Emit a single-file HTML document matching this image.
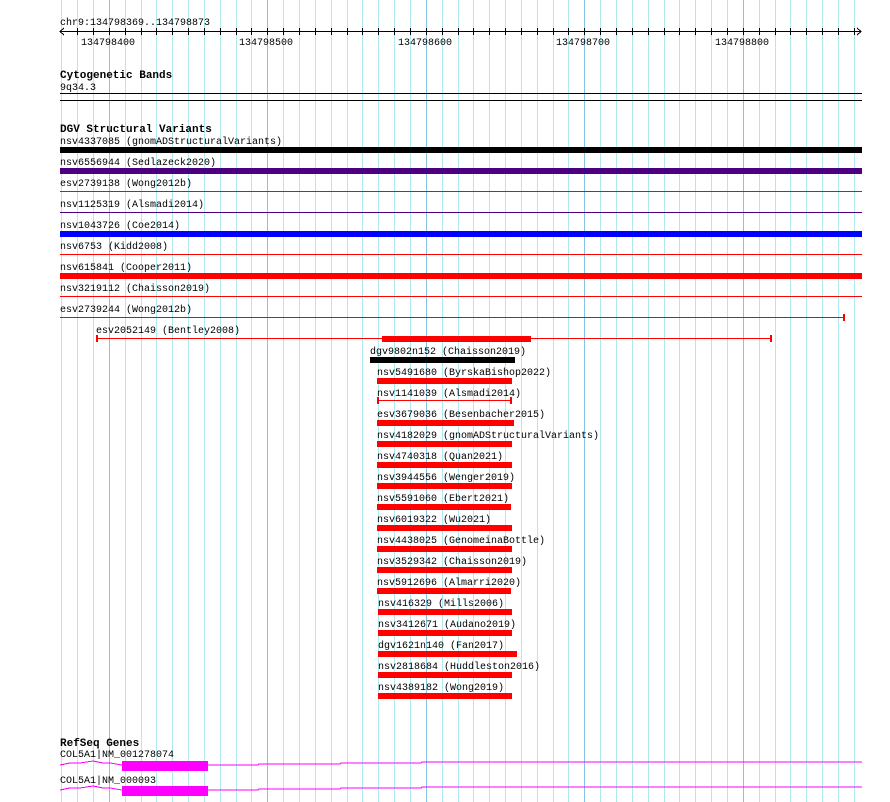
<!DOCTYPE html>
<html><head><meta charset="utf-8"><style>
html,body{margin:0;padding:0;background:#fff;width:890px;height:802px;overflow:hidden}
svg{display:block}
text{font-family:"Liberation Mono",monospace;font-size:10px;fill:#000}
.b{font-weight:bold;font-size:11px}
</style></head><body>
<svg width="890" height="802" viewBox="0 0 890 802" xmlns="http://www.w3.org/2000/svg" shape-rendering="crispEdges">
<g stroke="#aeeaf0" stroke-width="1">
<line x1="61.5" y1="0" x2="61.5" y2="802"/><line x1="77.5" y1="0" x2="77.5" y2="802"/><line x1="93.5" y1="0" x2="93.5" y2="802"/>
<line x1="125.5" y1="0" x2="125.5" y2="802"/><line x1="141.5" y1="0" x2="141.5" y2="802"/><line x1="156.5" y1="0" x2="156.5" y2="802"/><line x1="172.5" y1="0" x2="172.5" y2="802"/><line x1="188.5" y1="0" x2="188.5" y2="802"/><line x1="204.5" y1="0" x2="204.5" y2="802"/><line x1="220.5" y1="0" x2="220.5" y2="802"/><line x1="236.5" y1="0" x2="236.5" y2="802"/><line x1="251.5" y1="0" x2="251.5" y2="802"/>
<line x1="283.5" y1="0" x2="283.5" y2="802"/><line x1="299.5" y1="0" x2="299.5" y2="802"/><line x1="315.5" y1="0" x2="315.5" y2="802"/><line x1="331.5" y1="0" x2="331.5" y2="802"/><line x1="347.5" y1="0" x2="347.5" y2="802"/><line x1="362.5" y1="0" x2="362.5" y2="802"/><line x1="378.5" y1="0" x2="378.5" y2="802"/><line x1="394.5" y1="0" x2="394.5" y2="802"/><line x1="410.5" y1="0" x2="410.5" y2="802"/>
<line x1="442.5" y1="0" x2="442.5" y2="802"/><line x1="458.5" y1="0" x2="458.5" y2="802"/><line x1="473.5" y1="0" x2="473.5" y2="802"/><line x1="489.5" y1="0" x2="489.5" y2="802"/><line x1="505.5" y1="0" x2="505.5" y2="802"/><line x1="521.5" y1="0" x2="521.5" y2="802"/><line x1="537.5" y1="0" x2="537.5" y2="802"/><line x1="553.5" y1="0" x2="553.5" y2="802"/><line x1="568.5" y1="0" x2="568.5" y2="802"/>
<line x1="600.5" y1="0" x2="600.5" y2="802"/><line x1="616.5" y1="0" x2="616.5" y2="802"/><line x1="632.5" y1="0" x2="632.5" y2="802"/><line x1="648.5" y1="0" x2="648.5" y2="802"/><line x1="664.5" y1="0" x2="664.5" y2="802"/><line x1="679.5" y1="0" x2="679.5" y2="802"/><line x1="695.5" y1="0" x2="695.5" y2="802"/><line x1="711.5" y1="0" x2="711.5" y2="802"/><line x1="727.5" y1="0" x2="727.5" y2="802"/>
<line x1="759.5" y1="0" x2="759.5" y2="802"/><line x1="775.5" y1="0" x2="775.5" y2="802"/><line x1="790.5" y1="0" x2="790.5" y2="802"/><line x1="806.5" y1="0" x2="806.5" y2="802"/><line x1="822.5" y1="0" x2="822.5" y2="802"/><line x1="838.5" y1="0" x2="838.5" y2="802"/><line x1="854.5" y1="0" x2="854.5" y2="802"/>
</g>
<g stroke="#86c4e6" stroke-width="1">
<line x1="109.5" y1="0" x2="109.5" y2="802"/><line x1="267.5" y1="0" x2="267.5" y2="802"/><line x1="426.5" y1="0" x2="426.5" y2="802"/><line x1="584.5" y1="0" x2="584.5" y2="802"/><line x1="743.5" y1="0" x2="743.5" y2="802"/>
</g>
<text x="60" y="25">chr9:134798369..134798873</text>
<g stroke="#000" stroke-width="1">
<line x1="60" y1="31.5" x2="861" y2="31.5"/>
<polyline points="64,28 60,31.5 64,35" fill="none"/>
<polyline points="857,28 861,31.5 857,35" fill="none"/>
<path d="M77.5 28v7M93.5 28v7M109.5 28v7M125.5 28v7M141.5 28v7M156.5 28v7M172.5 28v7M188.5 28v7M204.5 28v7M220.5 28v7M236.5 28v7M251.5 28v7M267.5 28v7M283.5 28v7M299.5 28v7M315.5 28v7M331.5 28v7M347.5 28v7M362.5 28v7M378.5 28v7M394.5 28v7M410.5 28v7M426.5 28v7M442.5 28v7M458.5 28v7M473.5 28v7M489.5 28v7M505.5 28v7M521.5 28v7M537.5 28v7M553.5 28v7M568.5 28v7M584.5 28v7M600.5 28v7M616.5 28v7M632.5 28v7M648.5 28v7M664.5 28v7M679.5 28v7M695.5 28v7M711.5 28v7M727.5 28v7M743.5 28v7M759.5 28v7M775.5 28v7M790.5 28v7M806.5 28v7M822.5 28v7M838.5 28v7M854.5 28v7"/>
</g>
<text x="81" y="45">134798400</text>
<text x="239" y="45">134798500</text>
<text x="398" y="45">134798600</text>
<text x="556" y="45">134798700</text>
<text x="715" y="45">134798800</text>
<text class="b" x="60" y="78">Cytogenetic Bands</text>
<text x="60" y="90">9q34.3</text>
<rect x="60" y="93" width="802" height="1" fill="#000"/>
<rect x="60" y="100" width="802" height="1" fill="#000"/>
<text class="b" x="60" y="132">DGV Structural Variants</text>
<text x="60" y="144">nsv4337085 (gnomADStructuralVariants)</text>
<rect x="60" y="147" width="802" height="6" fill="#000"/>
<text x="60" y="165">nsv6556944 (Sedlazeck2020)</text>
<rect x="60" y="168" width="802" height="6" fill="#4b0082"/>
<text x="60" y="186">esv2739138 (Wong2012b)</text>
<rect x="60" y="191" width="802" height="1" fill="#f00"/>
<text x="60" y="207">nsv1125319 (Alsmadi2014)</text>
<rect x="60" y="212" width="802" height="1" fill="#4b0082"/>
<text x="60" y="228">nsv1043726 (Coe2014)</text>
<rect x="60" y="231" width="802" height="6" fill="#00f"/>
<text x="60" y="249">nsv6753 (Kidd2008)</text>
<rect x="60" y="254" width="802" height="1" fill="#f00"/>
<text x="60" y="270">nsv615841 (Cooper2011)</text>
<rect x="60" y="273" width="802" height="6" fill="#f00"/>
<text x="60" y="291">nsv3219112 (Chaisson2019)</text>
<rect x="60" y="296" width="802" height="1" fill="#f00"/>
<text x="60" y="312">esv2739244 (Wong2012b)</text>
<rect x="60" y="317" width="785" height="1" fill="#f00"/>
<rect x="843" y="314" width="2" height="7" fill="#f00"/>
<text x="96" y="333">esv2052149 (Bentley2008)</text>
<rect x="96" y="338" width="676" height="1" fill="#f00"/>
<rect x="96" y="335" width="2" height="7" fill="#f00"/>
<rect x="770" y="335" width="2" height="7" fill="#f00"/>
<rect x="382" y="336" width="149" height="6" fill="#f00"/>
<text x="370" y="354">dgv9802n152 (Chaisson2019)</text>
<rect x="370" y="357" width="145" height="6" fill="#000"/>
<text x="377" y="375">nsv5491680 (ByrskaBishop2022)</text>
<rect x="377" y="378" width="135" height="6" fill="#f00"/>
<text x="377" y="396">nsv1141039 (Alsmadi2014)</text>
<rect x="377" y="400" width="135" height="1" fill="#f00"/>
<rect x="377" y="397" width="2" height="7" fill="#f00"/>
<rect x="510" y="397" width="2" height="7" fill="#f00"/>
<g fill="#f00">
<rect x="377" y="420" width="137" height="6"/>
<rect x="377" y="441" width="135" height="6"/>
<rect x="377" y="462" width="135" height="6"/>
<rect x="377" y="483" width="135" height="6"/>
<rect x="377" y="504" width="134" height="6"/>
<rect x="377" y="525" width="135" height="6"/>
<rect x="377" y="546" width="135" height="6"/>
<rect x="377" y="567" width="135" height="6"/>
<rect x="377" y="588" width="134" height="6"/>
<rect x="378" y="609" width="134" height="6"/>
<rect x="378" y="630" width="134" height="6"/>
<rect x="378" y="651" width="139" height="6"/>
<rect x="378" y="672" width="134" height="6"/>
<rect x="378" y="693" width="134" height="6"/>
</g>
<text x="377" y="417">esv3679036 (Besenbacher2015)</text>
<text x="377" y="438">nsv4182029 (gnomADStructuralVariants)</text>
<text x="377" y="459">nsv4740318 (Quan2021)</text>
<text x="377" y="480">nsv3944556 (Wenger2019)</text>
<text x="377" y="501">nsv5591060 (Ebert2021)</text>
<text x="377" y="522">nsv6019322 (Wu2021)</text>
<text x="377" y="543">nsv4438025 (GenomeinaBottle)</text>
<text x="377" y="564">nsv3529342 (Chaisson2019)</text>
<text x="377" y="585">nsv5912696 (Almarri2020)</text>
<text x="378" y="606">nsv416329 (Mills2006)</text>
<text x="378" y="627">nsv3412671 (Audano2019)</text>
<text x="378" y="648">dgv1621n140 (Fan2017)</text>
<text x="378" y="669">nsv2818684 (Huddleston2016)</text>
<text x="378" y="690">nsv4389182 (Wong2019)</text>
<text class="b" x="60" y="746">RefSeq Genes</text>
<text x="60" y="757">COL5A1|NM_001278074</text>
<polyline fill="none" stroke="#f0f" stroke-width="1" points="60,765 70,763 80,763 93,761 103,763 110,763 122,765 258,765 259,764 340,764 341,763 421,763 422,762 862,762"/>
<rect x="122" y="761" width="86" height="10" fill="#f0f"/>
<text x="60" y="783">COL5A1|NM_000093</text>
<polyline fill="none" stroke="#f0f" stroke-width="1" points="60,790 70,788 80,788 93,786 103,788 110,788 122,790 258,790 259,789 340,789 341,788 421,788 422,787 862,787"/>
<rect x="122" y="786" width="86" height="10" fill="#f0f"/>
</svg>
</body></html>
